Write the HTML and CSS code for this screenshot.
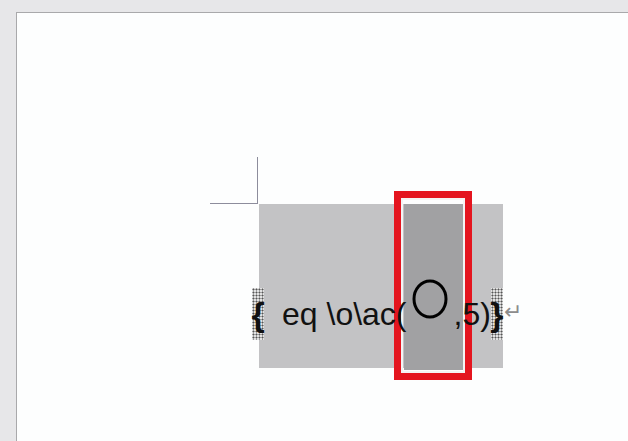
FILE: index.html
```html
<!DOCTYPE html>
<html>
<head>
<meta charset="utf-8">
<link rel="stylesheet" href="styles.css">
</head>
<body>
<div class="workspace">
  <div class="sheet">
    <div class="field">
      <div class="crop"><span class="crop-v"></span><span class="crop-h"></span></div>
      <div class="selection"></div>
      <div class="highlight"></div>
      <div class="code-line">
        <span class="brace">{</span>
        <span class="code">eq \o\ac(</span>
        <span class="ring"><svg width="36" height="40" viewBox="0 0 36 40"><ellipse cx="18" cy="20" rx="16" ry="18" fill="none" stroke="#000" stroke-width="3"/></svg></span>
        <span class="code tail">,5)</span>
        <span class="brace">}</span>
        <span class="ret">↵</span>
      </div>
    </div>
  </div>
</div>
</body>
</html>
```
FILE: styles.css
```css
html, body {
  margin: 0;
  padding: 0;
  width: 628px;
  height: 441px;
  overflow: hidden;
  background: #e7e7e9;
}
.workspace {
  padding: 12px 0 0 16px;
  height: 429px;
}
.sheet {
  background: #fdfefe;
  border-top: 1px solid #a9a9ab;
  border-left: 1px solid #a9a9ab;
  height: 429px;
  padding: 191px 0 0 242px;
  box-sizing: border-box;
}
.field {
  position: relative;
  width: 244px;
  height: 164px;
  padding-top: 84px;
  box-sizing: border-box;
  background: #c3c3c5;
}
.crop {
  position: absolute;
  left: -49px;
  top: -47px;
  width: 48px;
  height: 47px;
}
.crop-v {
  position: absolute;
  right: 0;
  top: 0;
  width: 1px;
  height: 47px;
  background: #8d8d9c;
}
.crop-h {
  position: absolute;
  left: 0;
  bottom: 0;
  width: 48px;
  height: 1px;
  background: #8d8d9c;
}
.selection {
  position: absolute;
  left: 145px;
  top: 0;
  width: 59px;
  height: 166px;
  background: #a1a1a3;
}
.highlight {
  position: absolute;
  left: 135px;
  top: -13px;
  width: 78px;
  height: 189px;
  box-sizing: border-box;
  border: 7px solid #e4151f;
  box-shadow: inset 0 0 0 2px #f4f4f4;
  z-index: 1;
}
.code-line {
  position: relative;
  z-index: 2;
  display: flex;
  align-items: center;
  margin-left: -7px;
  height: 52px;
  font-family: "Liberation Sans", Arial, sans-serif;
  font-size: 32px;
  color: #111;
  white-space: pre;
}
.code-line > * {
  flex-shrink: 0;
}
.brace {
  display: flex;
  align-items: center;
  justify-content: center;
  width: 12px;
  height: 52px;
  font-size: 34px;
  font-weight: bold;
  line-height: 1;
  background-image: radial-gradient(circle, #555 0.8px, transparent 1.2px);
  background-size: 3px 3px;
  background-color: #e2e2e2;
}
.code {
  margin-left: 18px;
  line-height: 1;
}
.ring {
  display: flex;
  margin: -30px 0 0 5px;
}
.ring svg {
  display: block;
}
.tail {
  margin-left: 6px;
}
.ret {
  font-size: 22px;
  color: #8c8c8c;
  margin: -4px 0 0 1px;
}
```
